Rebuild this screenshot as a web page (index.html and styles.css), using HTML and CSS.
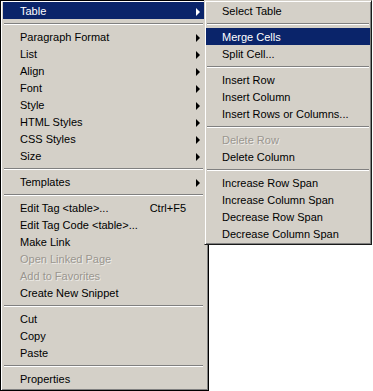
FILE: index.html
```html
<!DOCTYPE html>
<html lang="en">
<head>
    <meta charset="UTF-8">
    <title>Table Context Menu</title>
    <link rel="stylesheet" href="styles.css">
</head>
<body>
    <div class="stage">
        <!-- Main context menu -->
        <ul class="menu main-menu">
            <li class="item active"><span class="label">Table</span><span class="arrow"></span></li>
            <li class="sep"></li>
            <li class="item"><span class="label">Paragraph Format</span><span class="arrow"></span></li>
            <li class="item"><span class="label">List</span><span class="arrow"></span></li>
            <li class="item"><span class="label">Align</span><span class="arrow"></span></li>
            <li class="item"><span class="label">Font</span><span class="arrow"></span></li>
            <li class="item"><span class="label">Style</span><span class="arrow"></span></li>
            <li class="item"><span class="label">HTML Styles</span><span class="arrow"></span></li>
            <li class="item"><span class="label">CSS Styles</span><span class="arrow"></span></li>
            <li class="item"><span class="label">Size</span><span class="arrow"></span></li>
            <li class="sep"></li>
            <li class="item"><span class="label">Templates</span><span class="arrow"></span></li>
            <li class="sep"></li>
            <li class="item"><span class="label">Edit Tag &lt;table&gt;...</span><span class="shortcut">Ctrl+F5</span><span class="arrow none"></span></li>
            <li class="item"><span class="label">Edit Tag Code &lt;table&gt;...</span></li>
            <li class="item"><span class="label">Make Link</span></li>
            <li class="item disabled"><span class="label">Open Linked Page</span></li>
            <li class="item disabled"><span class="label">Add to Favorites</span></li>
            <li class="item"><span class="label">Create New Snippet</span></li>
            <li class="sep"></li>
            <li class="item"><span class="label">Cut</span></li>
            <li class="item"><span class="label">Copy</span></li>
            <li class="item"><span class="label">Paste</span></li>
            <li class="sep"></li>
            <li class="item"><span class="label">Properties</span></li>
        </ul>

        <!-- Table submenu -->
        <ul class="menu sub-menu">
            <li class="item"><span class="label">Select Table</span></li>
            <li class="sep"></li>
            <li class="item active"><span class="label">Merge Cells</span></li>
            <li class="item"><span class="label">Split Cell...</span></li>
            <li class="sep"></li>
            <li class="item"><span class="label">Insert Row</span></li>
            <li class="item"><span class="label">Insert Column</span></li>
            <li class="item"><span class="label">Insert Rows or Columns...</span></li>
            <li class="sep"></li>
            <li class="item disabled"><span class="label">Delete Row</span></li>
            <li class="item"><span class="label">Delete Column</span></li>
            <li class="sep"></li>
            <li class="item"><span class="label">Increase Row Span</span></li>
            <li class="item"><span class="label">Increase Column Span</span></li>
            <li class="item"><span class="label">Decrease Row Span</span></li>
            <li class="item"><span class="label">Decrease Column Span</span></li>
        </ul>
    </div>
</body>
</html>
```

FILE: styles.css
```css
body {
    margin: 0;
    background-color: #fff;
    font-family: "Liberation Sans", Arial, sans-serif;
    font-size: 11px;
    color: #000;
}
.stage {
    position: relative;
    width: 373px;
    height: 391px;
    overflow: hidden;
}
.menu {
    list-style: none;
    margin: 0;
    background-color: #d4d0c8;
    box-sizing: border-box;
}
.main-menu {
    width: 209px;
    height: 391px;
    padding: 1px 4px 2px 2px;
    border: 1px solid #000;
    box-shadow: inset 1px 1px 0 #fff, inset -1px -1px 0 #808080;
}
.sub-menu {
    position: absolute;
    left: 204px;
    top: 0;
    width: 168px;
    padding: 1px 1px 2px 1px;
    border: 1px solid #1a1a1a;
    border-top-color: #d4d0c8;
    border-left-color: #d4d0c8;
    box-shadow: inset 1px 1px 0 #fff, inset -1px -1px 0 #808080;
}
.item {
    display: flex;
    align-items: center;
    box-sizing: border-box;
    height: 17px;
    line-height: 15px;
    padding: 2px 4px 0 17px;
    white-space: nowrap;
}
.sub-menu .item {
    padding-left: 16px;
}
.label {
    flex: 1;
}
.arrow {
    width: 14px;
    height: 15px;
    display: flex;
    align-items: center;
    justify-content: flex-end;
}
.arrow::after {
    content: "";
    border-left: 4px solid #000;
    border-top: 4px solid transparent;
    border-bottom: 4px solid transparent;
}
.arrow.none::after {
    display: none;
}
.item.active {
    background-color: #0a246a;
    color: #fff;
}
.item.active .arrow::after {
    border-left-color: #fff;
}
.item.disabled {
    color: #9a968f;
    text-shadow: 1px 1px 0 rgba(255, 255, 255, 0.6);
}
.sep {
    height: 0;
    margin: 4px 1px 3px 1px;
    border-top: 1px solid #808080;
    border-bottom: 1px solid #fff;
}
```
